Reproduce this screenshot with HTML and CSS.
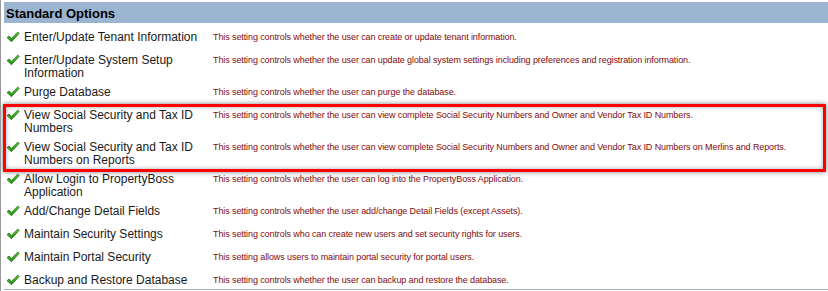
FILE: index.html
```html
<!DOCTYPE html>
<html lang="en">
<head>
<meta charset="UTF-8">
<title>Standard Options</title>
<link rel="stylesheet" href="styles.css">
</head>
<body>

<svg width="0" height="0" class="defs">
  <defs>
    <linearGradient id="chk" x1="0" y1="0" x2="0" y2="1">
      <stop offset="0" stop-color="#5fcf3a"/>
      <stop offset="1" stop-color="#1e8a10"/>
    </linearGradient>
    <symbol id="check" viewBox="0 0 14 12">
      <path d="M1 6.6 L3.2 5 L5.4 7.4 L11.8 1 L13.2 2.4 L5.5 10.8 Z" fill="url(#chk)" stroke="#16660c" stroke-width="0.7" stroke-linejoin="round"/>
    </symbol>
  </defs>
</svg>

<div class="panel">
  <div class="panel-head">Standard Options</div>

  <div class="options">
    <div class="opt">
      <svg class="tick"><use href="#check"/></svg>
      <div class="label">Enter/Update Tenant Information</div>
      <div class="desc">This setting controls whether the user can create or update tenant information.</div>
    </div>
    <div class="opt">
      <svg class="tick"><use href="#check"/></svg>
      <div class="label">Enter/Update System Setup Information</div>
      <div class="desc">This setting controls whether the user can update global system settings including preferences and registration information.</div>
    </div>
    <div class="opt">
      <svg class="tick"><use href="#check"/></svg>
      <div class="label">Purge Database</div>
      <div class="desc">This setting controls whether the user can purge the database.</div>
    </div>
    <div class="opt">
      <svg class="tick"><use href="#check"/></svg>
      <div class="label">View Social Security and Tax ID Numbers</div>
      <div class="desc">This setting controls whether the user can view complete Social Security Numbers and Owner and Vendor Tax ID Numbers.</div>
    </div>
    <div class="opt">
      <svg class="tick"><use href="#check"/></svg>
      <div class="label">View Social Security and Tax ID Numbers on Reports</div>
      <div class="desc">This setting controls whether the user can view complete Social Security Numbers and Owner and Vendor Tax ID Numbers on Merlins and Reports.</div>
    </div>
    <div class="opt">
      <svg class="tick"><use href="#check"/></svg>
      <div class="label">Allow Login to PropertyBoss Application</div>
      <div class="desc">This setting controls whether the user can log into the PropertyBoss Application.</div>
    </div>
    <div class="opt">
      <svg class="tick"><use href="#check"/></svg>
      <div class="label">Add/Change Detail Fields</div>
      <div class="desc">This setting controls whether the user add/change Detail Fields (except Assets).</div>
    </div>
    <div class="opt">
      <svg class="tick"><use href="#check"/></svg>
      <div class="label">Maintain Security Settings</div>
      <div class="desc">This setting controls who can create new users and set security rights for users.</div>
    </div>
    <div class="opt">
      <svg class="tick"><use href="#check"/></svg>
      <div class="label">Maintain Portal Security</div>
      <div class="desc">This setting allows users to maintain portal security for portal users.</div>
    </div>
    <div class="opt">
      <svg class="tick"><use href="#check"/></svg>
      <div class="label">Backup and Restore Database</div>
      <div class="desc">This setting controls whether the user can backup and restore the database.</div>
    </div>
  </div>

  <!-- highlight drawn over the two tax id rows -->
  <div class="highlight"></div>
</div>

</body>
</html>
```

FILE: styles.css
```css
body {
  margin: 0;
  background: #fff;
  font-family: "Liberation Sans", Arial, sans-serif;
}

.defs {
  position: absolute;
}

.panel {
  position: relative;
  height: 291px;
  border-left: 1px solid #9a9a9a;
  padding-left: 3px;
  box-sizing: border-box;
  overflow: hidden;
}

.panel-head {
  margin-top: 2px;
  height: 21px;
  line-height: 23px;
  padding-left: 2px;
  background-color: #9bb4d0;
  font-weight: bold;
  font-size: 13px;
  color: #000;
}

.options {
  margin-top: 2px;
  height: 264px;
  overflow: hidden;
  border-bottom: 1px solid #9bb4d0;
}

.opt {
  display: grid;
  grid-template-columns: 20px 185px 1fr;
  min-height: 23px;
  box-sizing: border-box;
}

.tick {
  width: 14px;
  height: 12px;
  margin: 6px 0 0 2px;
}

.label {
  padding-top: 6px;
  font-size: 12px;
  line-height: 13px;
  color: #1a1a1a;
}

.desc {
  padding: 6px 0 0 4px;
  font-size: 9px;
  letter-spacing: -0.1px;
  line-height: 12px;
  color: #850a0a;
  white-space: nowrap;
}

.highlight {
  position: absolute;
  left: 2px;
  top: 104px;
  width: 823px;
  height: 68px;
  box-sizing: border-box;
  border: 3px solid #ff0000;
  box-shadow: 0 0 5px rgba(0, 0, 0, 0.5), inset 0 0 4px rgba(0, 0, 0, 0.35);
}
```
